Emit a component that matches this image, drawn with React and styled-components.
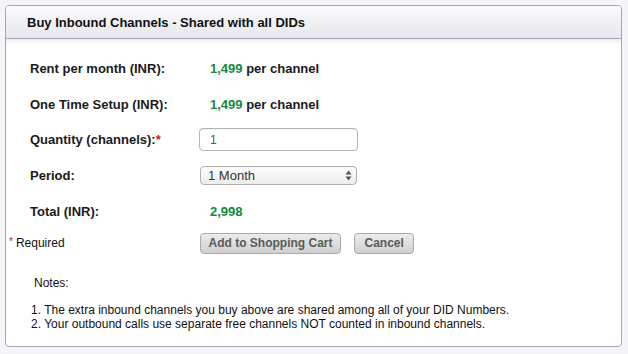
import React from 'react';
import styled, { createGlobalStyle } from 'styled-components';

const GlobalStyle = createGlobalStyle`
  html, body {
    margin: 0;
    padding: 0;
    background: #f5f5f7;
    font-family: "Liberation Sans", Arial, Helvetica, sans-serif;
    color: #111;
  }
`;

const Page = styled.div`
  width: 628px;
  height: 354px;
  padding: 5px 5px 0 5px;
  box-sizing: border-box;
`;

const Panel = styled.div`
  width: 617px;
  height: 342px;
  box-sizing: border-box;
  border: 1px solid #a3a7b6;
  border-radius: 4px;
  background: #fff;
  overflow: hidden;
`;

const Header = styled.div`
  height: 32px;
  border-bottom: 1px solid #a3a7b6;
  background: linear-gradient(#fbfbfd, #e6e7ec);
  display: flex;
  align-items: center;
  padding-left: 21px;
  font-size: 13px;
  font-weight: bold;
  color: #111;
`;

const Body = styled.div`
  padding: 12px 0 0 3px;
  background: linear-gradient(#eceef1 0px, #fff 5px);
`;

const Form = styled.div`
  display: grid;
  grid-template-columns: 190px 1fr;
  grid-template-rows: 35px 36px 35px 36px 37px 26px;
  align-items: center;
`;

const Label = styled.div`
  padding-left: 21px;
  font-size: 13px;
  font-weight: bold;
  color: #1a1a1a;
`;

const Value = styled.div`
  padding-left: 11px;
  font-size: 13px;
  font-weight: bold;
  color: #1a1a1a;
`;

const Green = styled.span`
  color: #138a3a;
`;

const Star = styled.span`
  color: #e01010;
  font-size: ${p => (p.$small ? '10px' : '13px')};
  vertical-align: ${p => (p.$small ? '2px' : 'baseline')};
  margin-right: ${p => (p.$small ? '3px' : '0')};
`;

const Required = styled.div`
  font-size: 12px;
  color: #111;
`;

const TextInput = styled.input`
  width: 159px;
  height: 23px;
  box-sizing: border-box;
  border: 1px solid #b4b4b4;
  border-radius: 4px;
  padding: 0 10px;
  font-family: inherit;
  font-size: 12px;
  color: #555;
  outline: none;
  box-shadow: inset 0 1px 1px rgba(0, 0, 0, 0.06);
`;

const Select = styled.div`
  width: 157px;
  height: 19px;
  margin-left: 1px;
  box-sizing: border-box;
  border: 1px solid #b0b0b0;
  border-radius: 4px;
  background: linear-gradient(#fdfdfd, #ececec);
  display: flex;
  align-items: center;
  justify-content: space-between;
  padding: 0 4px 0 7px;
  font-size: 13px;
  color: #333;
`;

const Buttons = styled.div`
  display: flex;
  align-items: center;
  gap: 13px;
  margin-left: 1px;
`;

const Button = styled.button`
  height: 21px;
  padding: 0 ${p => p.$pad}px;
  box-sizing: border-box;
  border: 1px solid #a9a9a9;
  border-radius: 4px;
  background: linear-gradient(#ececec, #cfcfcf);
  font-family: inherit;
  font-size: 12px;
  font-weight: bold;
  color: #5a5a5a;
`;

const Notes = styled.div`
  padding: 20px 0 0 22px;
  font-size: 12px;
  color: #111;
`;

const NotesTitle = styled.div`
  line-height: 14px;
  margin-left: 3px;
  margin-bottom: 13px;
`;

const NoteLine = styled.div`
  line-height: 14px;
`;

const Arrows = () => (
  <svg width="7" height="11" viewBox="0 0 7 11">
    <path d="M3.5 0.5 L6.5 4.5 L0.5 4.5 Z" fill="#555" />
    <path d="M3.5 10.5 L6.5 6.5 L0.5 6.5 Z" fill="#555" />
  </svg>
);

export default function App() {
  return (
    <Page>
      <GlobalStyle />
      <Panel>
        <Header>Buy Inbound Channels - Shared with all DIDs</Header>
        <Body>
          <Form>
            <Label>Rent per month (INR):</Label>
            <Value><Green>1,499</Green> per channel</Value>

            <Label>One Time Setup (INR):</Label>
            <Value><Green>1,499</Green> per channel</Value>

            <Label>Quantity (channels):<Star>*</Star></Label>
            <div><TextInput defaultValue="1" /></div>

            <Label>Period:</Label>
            <Select>
              <span>1 Month</span>
              <Arrows />
            </Select>

            <Label>Total (INR):</Label>
            <Value><Green>2,998</Green></Value>

            <Required><Star $small>*</Star>Required</Required>
            <Buttons>
              <Button $pad={7.5}>Add to Shopping Cart</Button>
              <Button $pad={9.5}>Cancel</Button>
            </Buttons>
          </Form>
          <Notes>
            <NotesTitle>Notes:</NotesTitle>
            <NoteLine>1. The extra inbound channels you buy above are shared among all of your DID Numbers.</NoteLine>
            <NoteLine>2. Your outbound calls use separate free channels NOT counted in inbound channels.</NoteLine>
          </Notes>
        </Body>
      </Panel>
    </Page>
  );
}
